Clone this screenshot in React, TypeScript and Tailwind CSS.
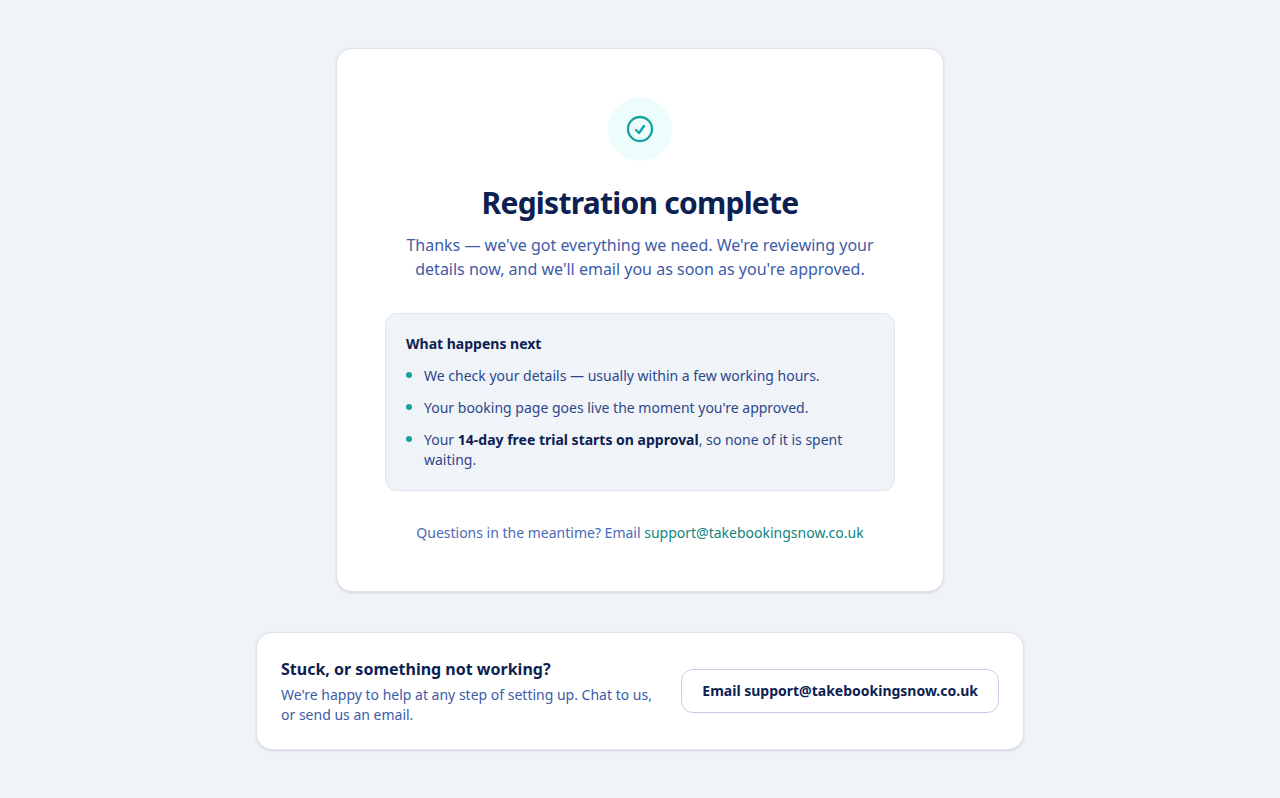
import type { ReactNode } from 'react';

const SUPPORT_EMAIL = 'support@takebookingsnow.co.uk';

const nextSteps: ReactNode[] = [
  'We check your details — usually within a few working hours.',
  "Your booking page goes live the moment you're approved.",
  <>
    Your <strong className="font-bold text-[#0d2150]">14-day free trial starts on approval</strong>, so none of it is
    spent waiting.
  </>,
];

function CheckCircleIcon() {
  return (
    <svg
      className="size-8"
      viewBox="0 0 24 24"
      fill="none"
      stroke="currentColor"
      strokeWidth={1.75}
      strokeLinecap="round"
      strokeLinejoin="round"
      aria-hidden="true"
    >
      <path d="M9 12.75 11.25 15 15 9.75M21 12a9 9 0 1 1-18 0 9 9 0 0 1 18 0Z" />
    </svg>
  );
}

function RegistrationCard() {
  return (
    <section className="w-full max-w-[608px] rounded-2xl border border-[#e0e5f0] bg-white p-12 text-center shadow-sm">
      <div className="mx-auto flex size-16 items-center justify-center rounded-full bg-[#edfdfb] text-[#14a3a0]">
        <CheckCircleIcon />
      </div>

      <h1 className="mt-6 text-3xl font-bold tracking-tight text-[#0d2150]">Registration complete</h1>
      <p className="mt-3 text-base text-[#3d5ba9]">
        Thanks — we've got everything we need. We're reviewing your details now, and we'll email you as soon as you're
        approved.
      </p>

      <div className="mt-8 rounded-xl border border-[#dfe5f0] bg-[#f0f4f9] p-5 text-left text-sm">
        <h2 className="font-bold text-[#0d2150]">What happens next</h2>
        <ul className="mt-3 space-y-3 text-[#2c4789]">
          {nextSteps.map((step, i) => (
            <li key={i} className="flex gap-3">
              <span className="mt-1.5 size-1.5 shrink-0 rounded-full bg-[#14a3a0]" />
              <p>{step}</p>
            </li>
          ))}
        </ul>
      </div>

      <p className="mt-8 text-sm text-[#4a69b5]">
        Questions in the meantime? Email{' '}
        <a href={`mailto:${SUPPORT_EMAIL}`} className="text-[#0f8580] hover:underline">
          {SUPPORT_EMAIL}
        </a>
      </p>
    </section>
  );
}

function HelpCard() {
  return (
    <aside className="flex w-full max-w-3xl flex-col gap-6 rounded-2xl border border-[#e0e5f0] bg-white p-6 shadow-sm sm:flex-row sm:items-center sm:justify-between">
      <div>
        <h2 className="text-base font-bold text-[#0d2150]">Stuck, or something not working?</h2>
        <p className="mt-1 text-sm text-[#3d5ba9]">
          We're happy to help at any step of setting up. Chat to us, or send us an email.
        </p>
      </div>
      <a
        href={`mailto:${SUPPORT_EMAIL}`}
        className="inline-flex h-11 shrink-0 items-center justify-center rounded-xl border border-[#c3cce3] bg-white px-5 text-sm font-bold text-[#0d2150] hover:bg-[#f0f4f9]"
      >
        Email {SUPPORT_EMAIL}
      </a>
    </aside>
  );
}

export default function App() {
  return (
    <main className="flex min-h-screen flex-col items-center gap-10 bg-[#f0f4f9] px-4 py-12 font-['Noto_Sans',sans-serif]">
      <RegistrationCard />
      <HelpCard />
    </main>
  );
}
